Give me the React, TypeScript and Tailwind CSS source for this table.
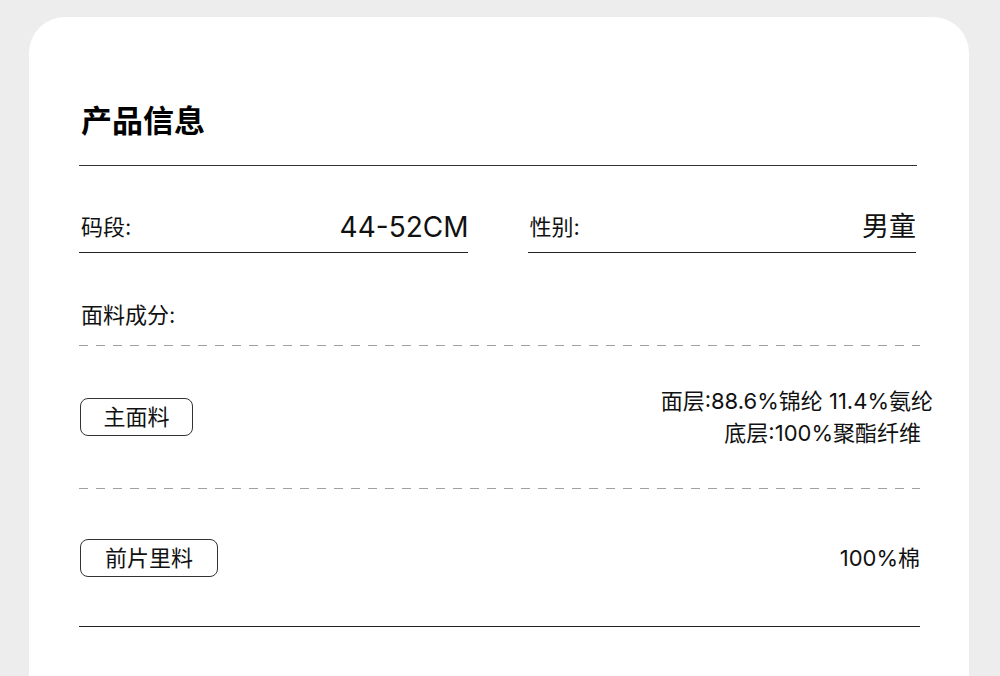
import React from 'react';

const font = { fontFamily: 'Inter, "Noto Sans CJK SC", sans-serif' };

const Dashed = () => (
    <div className="h-px w-full bg-[repeating-linear-gradient(to_right,#a0a0a0_0px,#a0a0a0_9px,transparent_9px,transparent_17px)]" />
);

const Badge = ({ children, w }: { children: React.ReactNode; w: string }) => (
    <div className={`${w} ml-px h-[38px] flex items-center justify-center rounded-[8px] border border-[#333] text-[22px] leading-none text-[#111]`}>
        {children}
    </div>
);

const App = () => {
    return (
        <div className="w-[1000px] h-[676px] bg-[#ededed] overflow-hidden" style={font}>
            <div className="ml-[29px] mt-[17px] w-[940px] h-[700px] bg-white rounded-t-[36px] pl-[50px]">
                <div className="w-[838px] pt-[84px] pb-[24px] border-b border-[#333]">
                    <h1 className="h-[40px] leading-[40px] text-[31px] font-bold text-black ml-[2px]">产品信息</h1>
                </div>

                <div className="w-[837px] grid grid-cols-2 gap-[60px]">
                    <div className="h-[87px] border-b border-[#222] flex items-end justify-between pb-[10px]">
                        <span className="text-[22px] leading-[30px] text-[#111] ml-[2px]">码段:</span>
                        <span className="text-[28px] leading-[30px] text-[#111] -mr-[1px]">44-52CM</span>
                    </div>
                    <div className="h-[87px] border-b border-[#222] flex items-end justify-between pb-[10px]">
                        <span className="text-[22px] leading-[30px] text-[#111] ml-[2px]">性别:</span>
                        <span className="text-[27px] leading-[30px] text-[#111]">男童</span>
                    </div>
                </div>

                <div className="w-[841px]">
                    <div className="pt-[47px] pb-[15px]">
                        <span className="block text-[22px] leading-[30px] text-[#111] ml-[2px]">面料成分:</span>
                    </div>
                    <Dashed />

                    <div className="h-[142px] flex items-center justify-between">
                        <Badge w="w-[113px]">主面料</Badge>
                        <div className="flex flex-col items-end text-[22px] leading-[32px] text-[#111]">
                            <span className="-mr-[13px]">面层:88.6%锦纶 11.4%氨纶</span>
                            <span className="-mr-[1px]">底层:100%聚酯纤维</span>
                        </div>
                    </div>
                    <Dashed />

                    <div className="h-[138px] flex items-center justify-between border-b border-[#222]">
                        <Badge w="w-[138px]">前片里料</Badge>
                        <span className="text-[22px] leading-[32px] text-[#111]">100%棉</span>
                    </div>
                </div>
            </div>
        </div>
    );
};

export default App;
